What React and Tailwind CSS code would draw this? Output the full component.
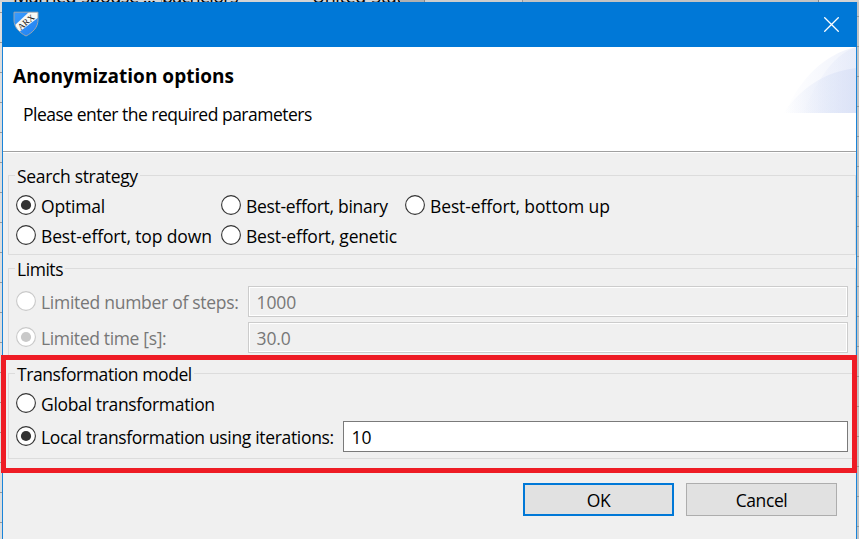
import React from "react";

function Radio({ label, checked, disabled, tracking = "" }) {
  const ring = disabled ? "#c9c9c9" : "#333333";
  return (
    <label className={`flex h-5 items-start gap-[5px] whitespace-nowrap ${disabled ? "text-[#777777]" : "text-black"}`}>
      <svg className="h-5 w-5 shrink-0" viewBox="0 0 20 20">
        <circle cx="10" cy="10" r="9.4" fill="#ffffff" stroke={ring} strokeWidth="1.1" />
        {checked && <circle cx="10" cy="10" r="5.1" fill={ring} />}
      </svg>
      <span className={`leading-[22px] ${tracking}`}>{label}</span>
    </label>
  );
}

function Group({ title, tracking = "", className, children }) {
  return (
    <fieldset className={`ml-[5px] border border-[#dcdcdc] ${className}`}>
      <legend className={`ml-[6px] h-[25px] px-[2px] pt-px leading-[25px] whitespace-nowrap ${tracking}`}>{title}</legend>
      {children}
    </fieldset>
  );
}

function Field({ value, disabled }) {
  return (
    <div
      className={`mr-[7px] h-[31px] flex-1 border ${
        disabled
          ? "border-[#cccccc] bg-[#f0f0f0] text-[#777777] shadow-[inset_0_0_0_1px_#ffffff]"
          : "border-[#7a7a7a] bg-white text-black"
      } pl-[7.5px] leading-[30px] tracking-[-0.1px]`}
    >
      {value}
    </div>
  );
}

function Shield() {
  return (
    <svg className="h-[26px] w-[26px]" viewBox="0 0 26 26">
      <defs>
        <linearGradient id="shieldBlue" x1="0" y1="0" x2="1" y2="1">
          <stop offset="0" stopColor="#3a9cff" />
          <stop offset="1" stopColor="#1f80f0" />
        </linearGradient>
        <clipPath id="shieldShape">
          <path d="M1 1H25V9C25 16 20 21.500 13 25C6 21.500 1 16 1 9Z" />
        </clipPath>
      </defs>
      <g clipPath="url(#shieldShape)">
        <rect width="26" height="26" fill="url(#shieldBlue)" />
        <path d="M1 15L16 1H26V6L7 20.500L2 19Z" fill="#f8f8f4" />
      </g>
      <path d="M1 1.200H25V9C25 16 20 21.500 13 25C6 21.500 1 16 1 9Z" fill="none" stroke="#9aa5b0" strokeWidth="1" />
      <text x="13" y="14" transform="rotate(-40 13 11)" textAnchor="middle" fontFamily="Liberation Serif, serif" fontSize="9" fill="#111">ARX</text>
    </svg>
  );
}

function Swoosh() {
  return (
    <svg className="h-[66px] w-[74px]" viewBox="0 0 74 66">
      <defs>
        <linearGradient id="fadeOuter">
          <stop offset="0" stopColor="#dfe5f8" stopOpacity="0" />
          <stop offset="1" stopColor="#dfe5f8" stopOpacity="0.5" />
        </linearGradient>
        <linearGradient id="fadeInner">
          <stop offset="0" stopColor="#dbe3f7" stopOpacity="0" />
          <stop offset="1" stopColor="#d8e0f6" stopOpacity="0.75" />
        </linearGradient>
      </defs>
      <path d="M3 66C17 33 42 7 74 0V66Z" fill="url(#fadeOuter)" />
      <path d="M20 66C35 37 47 10 74 0V66Z" fill="url(#fadeOuter)" />
      <path d="M1 66C18 43 40 25 74 21V66Z" fill="url(#fadeInner)" />
    </svg>
  );
}

export default function App() {
  return (
    <div className="flex h-[539px] w-[859px] flex-col overflow-hidden bg-[#c3c3c3] font-['Open_Sans','Noto_Sans',sans-serif] text-[17.5px] text-black">
      <div className="flex h-[2px] overflow-hidden bg-[#c6c6c6] text-[18px] leading-[18px] whitespace-nowrap">
        <div className="flex w-[162px] border-r border-[#999999] bg-[#d4d4d4] pl-[13px]"><span className="-mt-[13px] tracking-[-0.5px]">Married-spouse ...</span></div>
        <div className="flex w-[150px] bg-[#d4d4d4]"><span className="-mt-[13px] tracking-[-0.7px]">bachelors</span></div>
        <div className="flex w-[88px] bg-[#d4d4d4]"><span className="-mt-[13px] tracking-[-0.4px]">United-Stat</span></div>
        <div className="w-[25px] border-r border-[#888888] bg-[#b0b0b0]" />
        <div className="w-[98px] border-r border-[#999999] bg-[#cdcdcd]" />
        <div className="w-[296px] border-r border-[#888888] bg-[#c3c3c3]" />
        <div className="flex-1 bg-[#d4d4d4]" />
      </div>

      <div className="flex flex-1">
        <div className="w-[2px] bg-[#dddddd] bg-[repeating-linear-gradient(180deg,transparent_0px,transparent_10px,#999999_10px,#999999_11px,transparent_11px,transparent_30px)]" />

        <div className="flex w-[855px] flex-col border-x border-[#1a84d9] bg-[#f0f0f0]">
          <div className="-mx-px flex h-[45px] items-start justify-between bg-[#0078d7] pt-[9px] pr-[18px] pl-[11px]">
            <Shield />
            <svg className="mt-[6px] h-[15px] w-[15px]" viewBox="0 0 15 15">
              <path d="M0.300 0.300L14.700 14.700M14.700 0.300L0.300 14.700" stroke="#ffffff" strokeWidth="1.3" />
            </svg>
          </div>

          <div className="flex h-[104px] justify-between bg-white">
            <div className="pl-[10px]">
              <h1 className="mt-[17px] text-[19px] leading-6 font-bold tracking-[0.02px] whitespace-nowrap">Anonymization options</h1>
              <p className="mt-[14px] ml-[10px] leading-6 tracking-[-0.5px] whitespace-nowrap">Please enter the required parameters</p>
            </div>
            <Swoosh />
          </div>
          <div className="h-[2px] border-t border-[#a0a0a0] bg-white" />

          <div className="flex flex-1 flex-col pt-[10px]">
            <Group title="Search strategy" tracking="tracking-[-0.33px]" className="h-[92px]">
              <div className="grid grid-cols-[205px_184px_1fr] gap-y-[10px] pt-[7px] pl-[7px]">
                <Radio label="Optimal" checked tracking="tracking-[-0.2px]" />
                <Radio label="Best-effort, binary" tracking="tracking-[-0.3px]" />
                <Radio label="Best-effort, bottom up" tracking="tracking-[-0.12px]" />
                <Radio label="Best-effort, top down" tracking="tracking-[-0.13px]" />
                <Radio label="Best-effort, genetic" tracking="tracking-[-0.2px]" />
              </div>
            </Group>

            <Group title="Limits" tracking="tracking-[-0.45px]" className="mt-px h-[102px]">
              <div className="flex flex-col gap-[5px] pt-[5px] pl-[7px]">
                <div className="flex">
                  <div className="w-[232px] pt-[5px]"><Radio label="Limited number of steps:" disabled tracking="tracking-[-0.28px]" /></div>
                  <Field value="1000" disabled />
                </div>
                <div className="flex">
                  <div className="w-[232px] pt-[5px]"><Radio label="Limited time [s]:" checked disabled tracking="tracking-[-0.34px]" /></div>
                  <Field value="30.0" disabled />
                </div>
              </div>
            </Group>

            <Group title="Transformation model" tracking="tracking-[-0.42px]" className="mt-[3px] h-[98px]">
              <div className="flex flex-col gap-2 pt-[7px] pl-[7px]">
                <Radio label="Global transformation" tracking="tracking-[-0.33px]" />
                <div className="flex">
                  <div className="w-[327px] pt-[5px]"><Radio label="Local transformation using iterations:" checked tracking="tracking-[-0.33px]" /></div>
                  <Field value="10" />
                </div>
              </div>
            </Group>

            <div className="mt-6 flex justify-end gap-3 pr-[19px]">
              <button className="h-[33px] w-[151px] border-2 border-[#0078d7] bg-[#e1e1e1] pt-px leading-[27px] tracking-[-0.4px]">OK</button>
              <button className="h-[33px] w-[151px] border border-[#adadad] bg-[#e1e1e1] pt-px leading-[29px] tracking-[-0.4px]">Cancel</button>
            </div>
          </div>
        </div>

        <div className="flex-1 bg-[#c3c3c3] bg-[repeating-linear-gradient(180deg,transparent_0px,transparent_14px,#999999_14px,#999999_15px,transparent_15px,transparent_30px)]" />
      </div>

      <div className="pointer-events-none absolute top-[355px] left-px h-[118px] w-[856px] border-[5px] border-[#ee1c25]" />
    </div>
  );
}
